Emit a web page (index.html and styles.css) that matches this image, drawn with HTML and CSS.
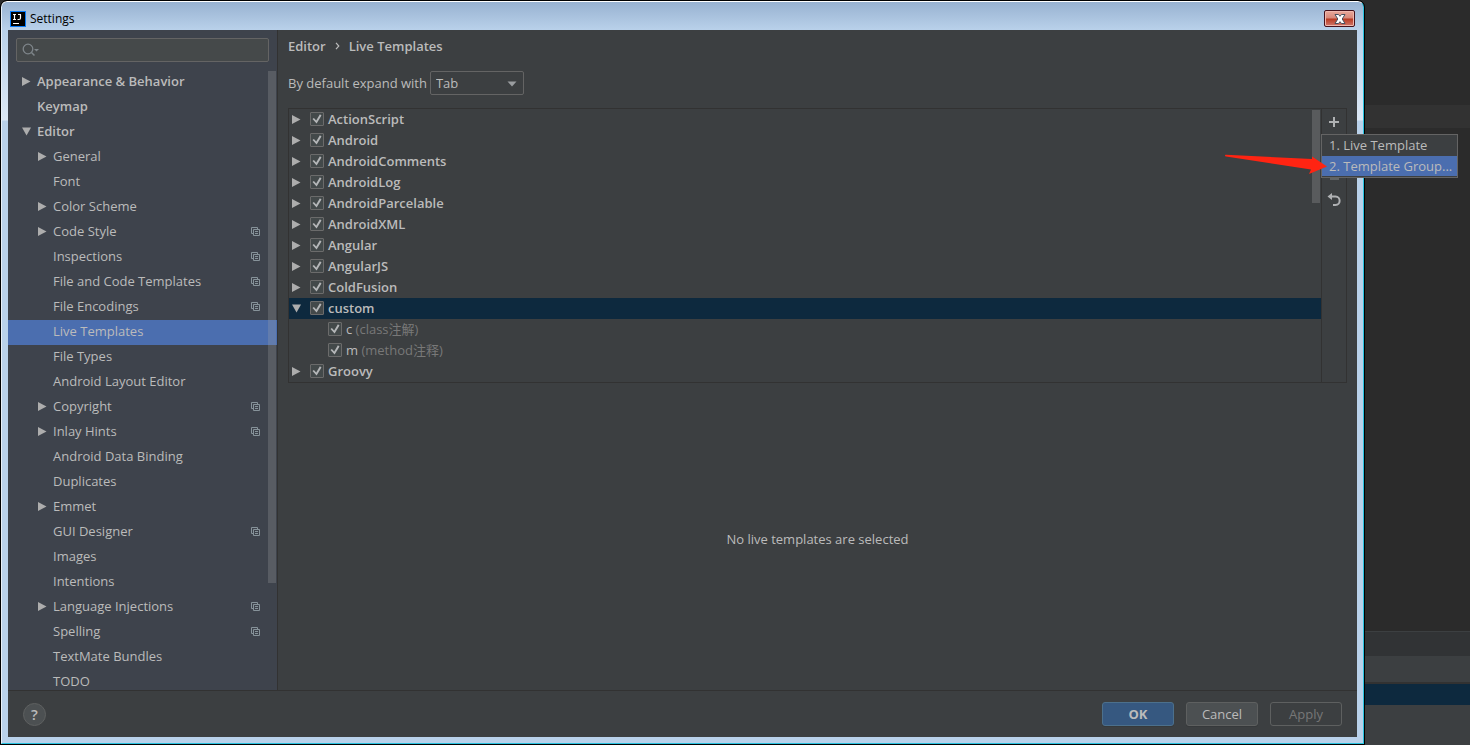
FILE: index.html
```html
<!DOCTYPE html>
<html lang="en">
<head>
<meta charset="utf-8">
<title>Settings</title>
<link rel="stylesheet" href="styles.css">
</head>
<body>
<svg class="defs" aria-hidden="true">
  <symbol id="right" viewBox="0 0 9 9"><path d="M0 0V9L8.5 4.5Z" fill="#adadad"/></symbol>
  <symbol id="down" viewBox="0 0 9 9"><path d="M0 0.5H9L4.5 8.5Z" fill="#adadad"/></symbol>
  <symbol id="copy" viewBox="0 0 9 9"><path d="M2 6.5H0.5V0.5H6.5V2M2.5 2.5H8.5V8.5H2.5ZM4 4.5H7M4 6.5H7" fill="none" stroke="#87939a"/></symbol>
</svg>

<main class="window">
  <header class="titlebar">
    <svg class="logo" viewBox="0 0 16 16" aria-hidden="true"><rect x="0.5" y="0.5" width="15" height="15" fill="#000" stroke="#087cfa"/><path d="M3 3.5H6M4.5 3.5V8M3 8.5H6M8 3.5H11M10.5 3.5V7Q10.5 8.5 9 8.5H7.5" fill="none" stroke="#fff" stroke-width="1.2"/><path d="M3 12.5H9" stroke="#fff"/></svg>
    <h1 class="title">Settings</h1>
    <button class="close" aria-label="Close"><svg viewBox="0 0 12 10"><path d="M1 0.5H4.5L6 2.3L7.5 0.5H11L8.2 5L11 9.5H7.5L6 7.7L4.5 9.5H1L3.8 5Z" fill="#fff" stroke="#48505f" stroke-width="1"/></svg></button>
  </header>

  <div class="content">
    <nav class="sidebar" aria-label="Settings categories">
      <label class="search">
        <svg viewBox="0 0 18 16" aria-hidden="true"><circle cx="6" cy="7" r="4.8" fill="none" stroke="#7e858a" stroke-width="1.3"/><path d="M9.5 10.5L12.5 13.5" stroke="#7e858a" stroke-width="1.5"/><path d="M12 7H17L14.5 9.6Z" fill="#7e858a"/></svg>
        <input type="text" aria-label="Search settings">
      </label>
      <div class="tree">
        <div class="item top"><svg class="arrow"><use href="#right"/></svg><span>Appearance &amp; Behavior</span></div>
        <div class="item top"><i class="arrow"></i><span>Keymap</span></div>
        <div class="item top"><svg class="arrow"><use href="#down"/></svg><span>Editor</span></div>
        <div class="item"><svg class="arrow"><use href="#right"/></svg><span>General</span></div>
        <div class="item"><i class="arrow"></i><span>Font</span></div>
        <div class="item"><svg class="arrow"><use href="#right"/></svg><span>Color Scheme</span></div>
        <div class="item"><svg class="arrow"><use href="#right"/></svg><span>Code Style</span><svg class="copy"><use href="#copy"/></svg></div>
        <div class="item"><i class="arrow"></i><span>Inspections</span><svg class="copy"><use href="#copy"/></svg></div>
        <div class="item"><i class="arrow"></i><span>File and Code Templates</span><svg class="copy"><use href="#copy"/></svg></div>
        <div class="item"><i class="arrow"></i><span>File Encodings</span><svg class="copy"><use href="#copy"/></svg></div>
        <div class="item active"><i class="arrow"></i><span>Live Templates</span></div>
        <div class="item"><i class="arrow"></i><span>File Types</span></div>
        <div class="item"><i class="arrow"></i><span>Android Layout Editor</span></div>
        <div class="item"><svg class="arrow"><use href="#right"/></svg><span>Copyright</span><svg class="copy"><use href="#copy"/></svg></div>
        <div class="item"><svg class="arrow"><use href="#right"/></svg><span>Inlay Hints</span><svg class="copy"><use href="#copy"/></svg></div>
        <div class="item"><i class="arrow"></i><span>Android Data Binding</span></div>
        <div class="item"><i class="arrow"></i><span>Duplicates</span></div>
        <div class="item"><svg class="arrow"><use href="#right"/></svg><span>Emmet</span></div>
        <div class="item"><i class="arrow"></i><span>GUI Designer</span><svg class="copy"><use href="#copy"/></svg></div>
        <div class="item"><i class="arrow"></i><span>Images</span></div>
        <div class="item"><i class="arrow"></i><span>Intentions</span></div>
        <div class="item"><svg class="arrow"><use href="#right"/></svg><span>Language Injections</span><svg class="copy"><use href="#copy"/></svg></div>
        <div class="item"><i class="arrow"></i><span>Spelling</span><svg class="copy"><use href="#copy"/></svg></div>
        <div class="item"><i class="arrow"></i><span>TextMate Bundles</span></div>
        <div class="item"><i class="arrow"></i><span>TODO</span></div>
        <div class="tree-thumb"></div>
      </div>
    </nav>

    <section class="panel">
      <div class="crumbs"><span>Editor</span><svg viewBox="0 0 5 8" aria-hidden="true"><path d="M1 0.8L3.8 4L1 7.2" fill="none" stroke="#bbb" stroke-width="1.2"/></svg><span>Live Templates</span></div>
      <div class="expand">
        <label for="expand">By default expand with</label>
        <div class="combo">
          <select id="expand"><option>Tab</option></select>
          <svg viewBox="0 0 10 6" aria-hidden="true"><path d="M0.5 0.5H9.5L5 5.5Z" fill="#9a9da0"/></svg>
        </div>
      </div>

      <div class="templates">
        <div class="list">
          <div class="row"><svg class="arrow"><use href="#right"/></svg><label><input type="checkbox" checked>ActionScript</label></div>
          <div class="row"><svg class="arrow"><use href="#right"/></svg><label><input type="checkbox" checked>Android</label></div>
          <div class="row"><svg class="arrow"><use href="#right"/></svg><label><input type="checkbox" checked>AndroidComments</label></div>
          <div class="row"><svg class="arrow"><use href="#right"/></svg><label><input type="checkbox" checked>AndroidLog</label></div>
          <div class="row"><svg class="arrow"><use href="#right"/></svg><label><input type="checkbox" checked>AndroidParcelable</label></div>
          <div class="row"><svg class="arrow"><use href="#right"/></svg><label><input type="checkbox" checked>AndroidXML</label></div>
          <div class="row"><svg class="arrow"><use href="#right"/></svg><label><input type="checkbox" checked>Angular</label></div>
          <div class="row"><svg class="arrow"><use href="#right"/></svg><label><input type="checkbox" checked>AngularJS</label></div>
          <div class="row"><svg class="arrow"><use href="#right"/></svg><label><input type="checkbox" checked>ColdFusion</label></div>
          <div class="row selected"><svg class="arrow"><use href="#down"/></svg><label><input type="checkbox" checked>custom</label></div>
          <div class="row child"><label><input type="checkbox" checked>c <span class="note">(class注解)</span></label></div>
          <div class="row child"><label><input type="checkbox" checked>m <span class="note">(method注释)</span></label></div>
          <div class="row"><svg class="arrow"><use href="#right"/></svg><label><input type="checkbox" checked>Groovy</label></div>
          <div class="list-thumb"></div>
          <svg class="pointer" viewBox="0 0 104 22" aria-hidden="true"><path d="M1 2.4Q1 1.6 2 1.8L88 6V3.5L103 13.5L85 21L87 16.5L2 3.4Q1 3.2 1 2.4Z" fill="#ff2412"/></svg>
        </div>
        <div class="tools">
          <button aria-label="Add"><svg viewBox="0 0 16 16"><path d="M8 3V13M3 8H13" stroke="#afb1b3" stroke-width="2"/></svg></button>
          <button aria-label="Remove"><svg viewBox="0 0 16 16"><path d="M3 8H13" stroke="#606365" stroke-width="2"/></svg></button>
          <button aria-label="Duplicate"><svg viewBox="0 0 16 16"><path d="M4 4H13V14H4Z" fill="#606365"/></svg></button>
          <button aria-label="Revert"><svg viewBox="0 0 16 16"><path d="M4 4.5H9.5C15 4.5 15 13 9.5 13H7" fill="none" stroke="#afb1b3" stroke-width="2"/><path d="M1.5 4.5L6 1V8Z" fill="#afb1b3"/></svg></button>
          <div class="popup" role="menu">
            <button role="menuitem">1. Live Template</button>
            <button role="menuitem" class="hot">2. Template Group...</button>
          </div>
        </div>
      </div>
      <p class="empty">No live templates are selected</p>
    </section>
  </div>

  <footer class="footer">
    <button class="help" aria-label="Help">?</button>
    <button class="btn primary">OK</button>
    <button class="btn">Cancel</button>
    <button class="btn" disabled>Apply</button>
  </footer>
</main>

<aside class="backdrop" aria-hidden="true">
  <div class="caret-line"></div>
  <div class="editor"></div>
  <div class="status"></div>
  <div class="toolbar"></div>
  <div class="highlight"></div>
  <div class="bottom"></div>
</aside>
</body>
</html>
```
FILE: styles.css
```css
* { box-sizing: border-box; }
body {
  margin: 0;
  height: 100vh;
  display: flex;
  overflow: hidden;
  background: #2b2b2b;
  color: #bbbbbb;
  font: 13px/20px "Open Sans", "Noto Sans CJK SC", sans-serif;
}
button, input, select { font: inherit; color: inherit; margin: 0; padding: 0; }
button { border: 0; background: none; }
svg { display: block; flex: none; }
.defs { position: absolute; width: 0; height: 0; }

.window {
  flex: 1;
  min-width: 0;
  display: flex;
  flex-direction: column;
  padding: 0 6px 6px;
  border: 1px solid #28c3e0;
  border-top-color: #ffffff;
  border-left-color: #e8f0f8;
  border-radius: 6px 6px 0 0;
  margin: 1px;
  outline: 1px solid #000000;
  background: linear-gradient(#98b2d1 0, #b9d1ea 28px, #dce8f5 118px, #b9d1ea 119px);
}
.titlebar {
  height: 28px;
  display: flex;
  align-items: center;
  gap: 4px;
  padding: 5px 2px 0 2px;
  color: #000000;
}
.logo { width: 16px; height: 16px; }
.title { flex: 1; margin: 0; font-size: 12px; font-weight: 400; line-height: 18px; }
.close {
  width: 31px;
  height: 17px;
  display: grid;
  place-items: center;
  border: 1px solid #45121c;
  border-radius: 2px;
  background: linear-gradient(#e9a99b 0, #d8887a 7px, #b83a22 8px, #d0786c 100%);
  box-shadow: inset 0 0 0 1px #f0b8ae;
}
.close svg { width: 12px; height: 10px; }

.content { flex: 1; min-height: 0; display: flex; background: #3c3f41; }
.sidebar {
  width: 270px;
  flex: none;
  display: flex;
  flex-direction: column;
  gap: 8px;
  padding-top: 8px;
  overflow: hidden;
  background: #3e434c;
  border-right: 1px solid #323232;
}
.search {
  flex: none;
  height: 24px;
  margin: 0 8px;
  padding-left: 5px;
  display: flex;
  align-items: center;
  border: 1px solid #646464;
  border-radius: 2px;
  background: #45494a;
}
.search svg { width: 18px; height: 16px; }
.search input { flex: 1; min-width: 0; border: 0; outline: 0; background: none; }
.tree { position: relative; flex: 1; min-height: 0; overflow: hidden; }
.item {
  height: 25px;
  padding: 0 17px 3px 30px;
  display: flex;
  align-items: center;
}
.item span { flex: 1; white-space: nowrap; }
.item.top { padding-left: 14px; font-weight: 600; }
.item.active { background: #4b6eaf; }
.arrow, .copy { width: 9px; height: 9px; flex: none; margin-top: 1px; }
.item .arrow { margin-right: 6px; }
.tree-thumb {
  position: absolute;
  top: 1px;
  right: 1px;
  width: 8px;
  height: 82.5%;
  background: rgba(166, 166, 166, 0.25);
}

.panel { flex: 1; min-width: 0; display: flex; flex-direction: column; padding: 6px 10px 0; }
.crumbs { display: flex; align-items: center; gap: 9px; font-weight: 600; }
.crumbs svg { width: 5px; height: 8px; }
.expand { display: flex; align-items: center; gap: 3px; margin-top: 15px; }
.combo { position: relative; }
.combo select {
  display: block;
  width: 94px;
  height: 24px;
  padding-left: 5px;
  appearance: none;
  border: 1px solid #646464;
  border-radius: 2px;
  background: #3c3f41;
}
.combo svg { position: absolute; right: 7px; top: 10px; width: 10px; height: 6px; pointer-events: none; }

.templates { display: flex; margin-top: 13px; border: 1px solid #323232; }
.list { position: relative; flex: 1; min-width: 0; }
.row {
  height: 21px;
  display: flex;
  align-items: center;
  gap: 9px;
  padding: 0 0 1px 3px;
  font-weight: 600;
}
.row label { display: flex; align-items: center; height: 20px; white-space: pre; }
.row.selected { background: #0d293e; }
.row.child { padding-left: 39px; font-weight: 400; }
.note { color: #787878; }
.row input {
  position: relative;
  width: 14px;
  height: 14px;
  margin-right: 4px;
  appearance: none;
  border: 1px solid #6b6b6b;
  border-radius: 1px;
  background: #43494a;
}
.row input:checked::before {
  content: "";
  position: absolute;
  inset: 1px;
  background: #b4b6b8;
  clip-path: polygon(5% 50%, 19% 39%, 42% 64%, 79% 3%, 95% 14%, 46% 95%);
}
.list-thumb { position: absolute; top: 1px; right: 1px; width: 8px; height: 93px; background: #595b5d; }
.pointer { position: absolute; right: -7px; top: 44px; width: 104px; height: 22px; z-index: 3; }
.tools {
  position: relative;
  width: 25px;
  flex: none;
  display: flex;
  flex-direction: column;
  align-items: center;
  gap: 10px;
  padding-top: 5px;
  border-left: 1px solid #323232;
}
.tools > button, .tools > button svg { width: 16px; height: 16px; }
.popup {
  position: absolute;
  z-index: 2;
  left: -1px;
  top: 25px;
  width: 137px;
  padding-bottom: 1px;
  border: 1px solid #646464;
  background: #3c3f41;
}
.popup button { display: block; width: 100%; padding-left: 7px; text-align: left; line-height: 21px; white-space: nowrap; }
.popup .hot { background: #4b6eaf; line-height: 20px; }
.empty { flex: 1; display: grid; place-items: center; margin: 0; padding-top: 4px; }

.footer {
  flex: none;
  height: 47px;
  display: flex;
  align-items: center;
  gap: 12px;
  padding: 0 15px;
  border-top: 1px solid #323232;
  background: #3c3f41;
}
.help {
  width: 23px;
  height: 23px;
  margin-right: auto;
  border: 1px solid #5e6060;
  border-radius: 50%;
  background: #4c5052;
  font-size: 15px;
  font-weight: 600;
  line-height: 20px;
}
.btn {
  width: 72px;
  height: 24px;
  border: 1px solid #5e6060;
  border-radius: 3px;
  background: #4c5052;
  box-shadow: 0 1px 0 #36393b;
}
.btn.primary { border-color: #4c708c; background: #365880; font-weight: 700; }
.btn:disabled { background: #3c3f41; color: #777777; box-shadow: none; }

.backdrop {
  width: 105px;
  flex: none;
  display: flex;
  flex-direction: column;
  background: #2b2b2b;
}
.caret-line { height: 23px; margin-top: 105px; background: #323232; }
.editor { flex: 1; }
.status { height: 25px; background: #313335; border-top: 1px solid #3c3f41; }
.toolbar { height: 28px; background: #3c3f41; border-bottom: 2px solid #323232; }
.highlight { height: 21px; background: #0d293e; }
.bottom { height: 40px; background: #3c3f41; }
```
